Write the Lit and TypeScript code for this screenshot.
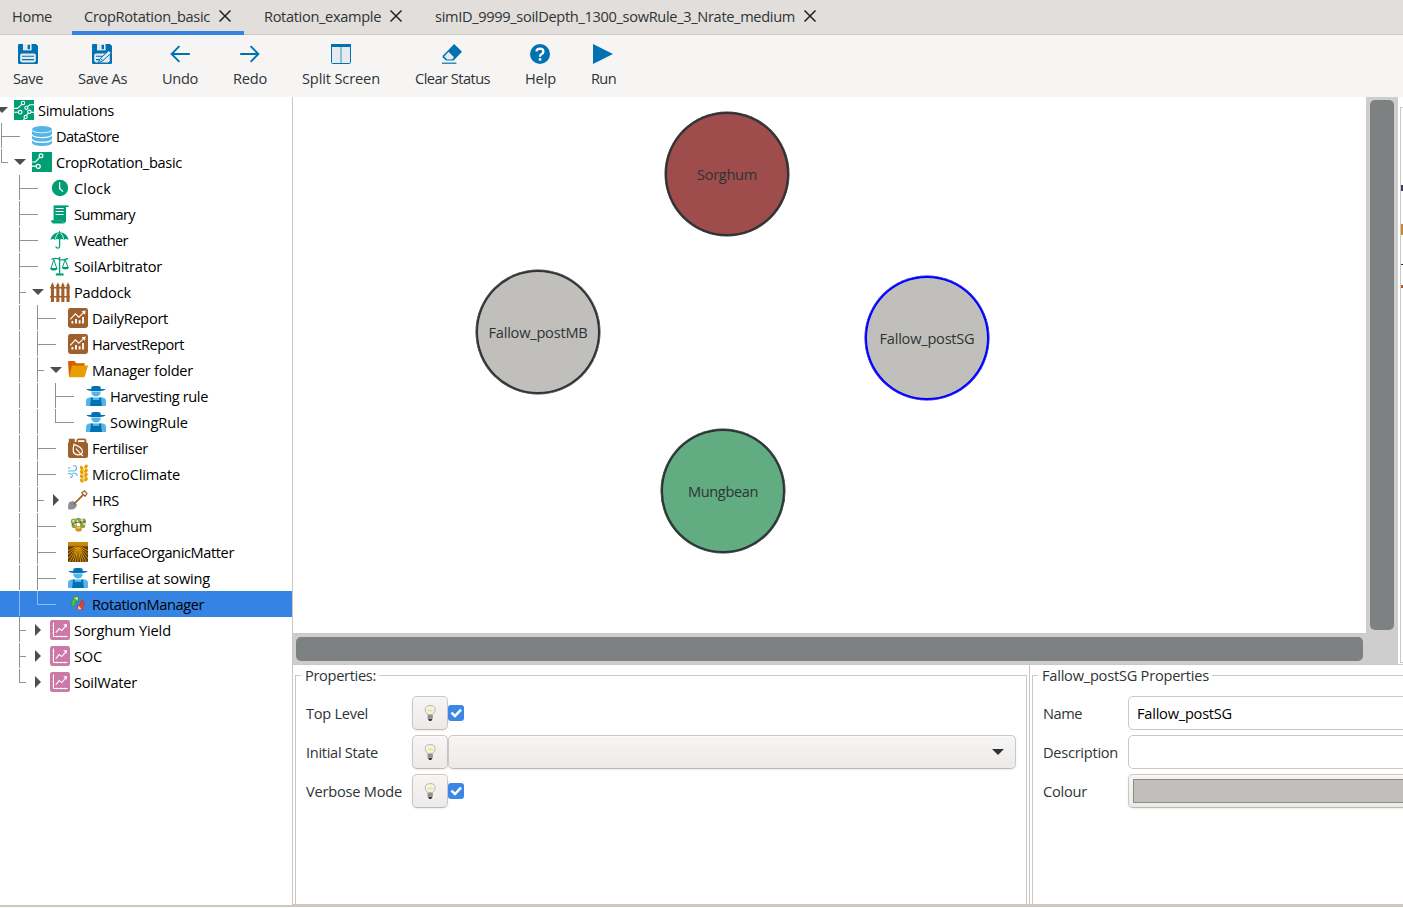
import { LitElement, html, svg, css, nothing, type TemplateResult } from "lit";
import { customElement, property } from "lit/decorators.js";
import { classMap } from "lit/directives/class-map.js";

/** A one-line label whose tracking is adjusted so that it takes a given width. */
@customElement("fit-label")
class FitLabel extends LitElement {
  @property() text = "";
  @property({ type: Number }) width = 0;

  static styles = css`
    :host {
      display: inline-block;
      flex: none;
      white-space: pre;
      line-height: 20px;
      height: 20px;
    }
    .run {
      display: inline-block;
    }
  `;

  updated() {
    const run = this.renderRoot.querySelector<HTMLElement>(".run")!;
    run.style.letterSpacing = "0px";
    const natural = run.getBoundingClientRect().width;
    run.style.letterSpacing = `${(this.width - natural) / this.text.length}px`;
  }

  render() {
    return html`<span class="run">${this.text}</span>`;
  }
}

const BLUE = "#0072b2";
const SKY = "#56b4e9";
const GREEN = "#009e73";
const BROWN = "#a0602c";
const PINK = "#cc79a7";

const farmer = svg`
  <path fill="${BLUE}" d="M5.6 0.6Q10 -0.8 14.4 0.6L14.8 3H19.4Q19.4 4.6 14 5H6Q0.6 4.6 0.6 3H5.2Z"/>
  <path fill="${SKY}" d="M5.2 5.6H14.8Q14.4 10.6 10 10.6Q5.6 10.6 5.2 5.6Z"/>
  <path fill="${SKY}" d="M0 20V15Q0 11.4 4 11.4H16Q20 11.4 20 15V20Z"/>
  <path fill="${BLUE}" d="M4.8 11.4H6.8V14H13.2V11.4H15.2V14.6L16 20H4L4.8 14.6Z"/>`;
const report = svg`
  <rect width="20" height="20" rx="2.4" fill="${BROWN}"/>
  <path stroke="#fff" stroke-width="1.8" d="M4.4 15.6V13M8 15.6V11M11.6 15.6V12.2M15 15.6V9" fill="none"/>
  <path stroke="#fff" stroke-width="1.1" fill="none" d="M2.2 11.4L7.4 5.8L10.8 9.2L16 4.2"/>
  <path fill="#fff" d="M13.6 3.2L17.6 2.6L17 6.8Z"/>`;
const graph = svg`
  <rect width="20" height="20" rx="2.2" fill="${PINK}"/>
  <path stroke="#fff" stroke-width="1" fill="none" d="M3.5 2.4V16.5H17.6M2.6 5.5H3.5M2.6 9.5H3.5M2.6 13H3.5M7 17.4V15.6M11 17.4V15.6M15 17.4V15.6"/>
  <path stroke="#fff" stroke-width="1.1" fill="none" d="M5.8 12.6L9.2 8.6L11.8 10.6L16 5.6"/>
  <path fill="#fff" d="M13.4 4.6L17 4L16.6 7.8Z"/>`;
const wheatGrains = [0, 1, 2, 3].map(
  (i) => svg`<ellipse cx="13.6" cy="${4 + i * 4.2}" rx="1.6" ry="2.2" transform="rotate(-28 13.6 ${4 + i * 4.2})"/>
  <ellipse cx="18" cy="${2.6 + i * 4.2}" rx="1.6" ry="2.2" transform="rotate(28 18 ${2.6 + i * 4.2})"/>`
);
const furrows = [-30, -17, -11, -7.4, -4.8, -2.4, 0, 2.4, 4.8, 7.4, 11, 17, 30].map(
  (d) => svg`<path d="M${10 + d * 0.08} 5L${10 + d * 1.2} 21"/>`
);

const ICONS: Record<string, TemplateResult> = {
  simulations: svg`
    <rect width="20" height="20" fill="${GREEN}"/>
    <g fill="none" stroke="#fff" stroke-width="1.1">
      <path d="M0 8.4H3.4L7.6 4.6M0 12.2H4.2M20 4.8H16L13.6 6.4M20 12.4H17.2M14.2 13.4L12.4 15.4M9.4 20L10.6 18.4"/>
      <circle cx="9" cy="3" r="1.7"/><circle cx="6.2" cy="12.2" r="1.8"/><circle cx="12.4" cy="7.8" r="1.6"/>
      <circle cx="15.4" cy="11.8" r="1.7"/><circle cx="11.6" cy="17" r="1.6"/>
    </g>`,
  datastore: svg`
    <g fill="${SKY}"><ellipse cx="10" cy="3.2" rx="10" ry="3.2"/>
    <path d="M0 4.6Q2 7.2 10 7.2Q18 7.2 20 4.6V8Q18.6 11 10 11Q1.4 11 0 8Z"/>
    <path d="M0 9.6Q2 12.2 10 12.2Q18 12.2 20 9.6V12.8Q18.6 15.6 10 15.6Q1.4 15.6 0 12.8Z"/>
    <path d="M0 14.4Q2 16.9 10 16.9Q18 16.9 20 14.4V17Q18.6 20 10 20Q1.4 20 0 17Z"/></g>`,
  simulation: svg`
    <rect width="20" height="20" fill="${GREEN}"/>
    <g fill="none" stroke="#fff" stroke-width="1.2"><path d="M0 10H3.4L7.6 5.4M0 14.2H4"/>
    <circle cx="9" cy="3.8" r="1.9"/><circle cx="6.2" cy="14.4" r="2"/></g>`,
  clock: svg`<circle cx="10" cy="10" r="8.2" fill="${GREEN}"/>
    <path d="M9.6 4.2V10.4L13 13.6" fill="none" stroke="#fff" stroke-width="1.3"/>`,
  summary: svg`
    <path fill="${GREEN}" d="M3.6 1.4H16V16.6H3.6Z"/><path fill="${GREEN}" d="M15 1.4H18.6V3H16.4Z"/>
    <path fill="${GREEN}" d="M1 16.2H12.6V17.4Q12.6 18.8 14.4 18.6V19.4H3Q1 19 1 16.2Z"/><path fill="${GREEN}" d="M12 15H16V17.2Q15.6 19 14 18.8Q12.4 18.4 12 15Z"/>
    <path stroke="#fff" stroke-width="1" d="M5.6 4.5H13.6M5.6 7.5H13.6M5.6 10.5H13.6"/>`,
  weather: svg`
    <path fill="${GREEN}" d="M9 1H10V2.2Q17.4 3 18.6 10.2Q16 7.8 13.8 10Q11.8 8 9.6 9.8Q7.4 8 5.2 10Q3 7.8 0.4 10.2Q1.6 3 9 2.2Z"/>
    <path stroke="#fff" stroke-width=".8" fill="none" d="M8.4 3Q5.6 5.4 5.3 9.6M10.6 3Q13.4 5.4 13.7 9.6"/>
    <path stroke="${GREEN}" stroke-width="1.2" fill="none" d="M9.6 9V16.6Q9.4 18.4 7.6 18.2Q6 18 5.8 16.2"/>`,
  arbitrator: svg`
    <g fill="none" stroke="${GREEN}" stroke-width="1.3"><path d="M9.6 1V17.6M1.4 3.4Q6 1.4 9.6 3.2Q13 5 18 2.4M6.4 18.4H13"/>
    <path stroke-width="1" d="M3.8 3.6L1 12.4M3.8 3.6L6.8 12.4M15.2 3.6L12.4 11.4M15.2 3.6L18 11.4"/></g>
    <path fill="${GREEN}" d="M0 12H7.6Q7 14.6 3.8 14.6Q0.6 14.6 0 12ZM11.6 11H19.2Q18.4 13.6 15.4 13.6Q12.4 13.6 11.6 11ZM5.8 17.4H13.6V19.4H5.8Z"/>`,
  paddock: svg`
    <g fill="${BROWN}"><path d="M0 5H20V6.4H0ZM0 14H20V15.4H0Z"/>
    ${[0.9, 6.3, 11.3, 16.5].map((x) => svg`<path d="M${x} 3.4L${x + 1.6} 0.2L${x + 3.1} 3.4V20H${x}Z"/>`)}</g>`,
  report,
  folder: svg`
    <path fill="#d55e00" d="M0 1.8Q0 1 1 1H6.6L8.2 3.2H16.6V8L1 16.6Z"/>
    <path fill="#e69f00" d="M4 5.4H20L17 16Q16.6 17.2 15.4 17.2H0.8Z"/>`,
  farmer,
  fertiliser: svg`
    <path fill="${BROWN}" d="M0.8 0.8H6.8V4H8.4V2.6Q8.4 0.4 10.6 0.4H16Q18.4 0.4 18.4 2.8V4.2Q20 4.6 20 6.2V18Q20 20 18 20H2Q0 20 0 18V6Q0 4.6 0.8 4.2Z"/>
    <path fill="#fff" d="M10 2.2H16.4V4H10Z"/>
    <path fill="none" stroke="#fff" stroke-width="1.2" d="M6 6.4Q14.6 9.4 14.4 13.6Q13.8 17.2 10 16.8Q5.4 16.4 5.2 12.4Q5.2 10 6 6.4ZM8 10.6L12.4 15.6L14.8 18"/>`,
  micro: svg`
    <path fill="none" stroke="${SKY}" stroke-width="1.1" d="M0 7H6Q9 6.4 8.4 3.2Q7.4 .8 5.2 2.2M0 4H2.6M4.4 9.2H6.6Q9.8 9.4 8.800 12M0 9.800H2.400Q5 10.400 4.200 12.600Q3.400 13.800 2 13"/>
    <g fill="#e69f00">${wheatGrains}<path d="M15.5 5H16.2V18H15.5Z"/></g>`,
  shovel: svg`
    <path fill="#8d8f92" d="M1.4 12L5.4 11L9 14.6Q8.4 18.6 4.6 19.6L0.4 19.6Q-0.6 14.6 1.4 12Z"/>
    <path fill="none" stroke="${BROWN}" stroke-width="1.7" d="M5.6 14.4L15.4 4.6"/>
    <path fill="none" stroke="${BROWN}" stroke-width="1.2" d="M13.8 2.8L17.2 6.2L19 3.6L16.4 0.8Z"/>`,
  sorghum: svg`
    <g fill="#8aa04e"><circle cx="5.8" cy="5.4" r="3"/><circle cx="10.4" cy="4.4" r="2.7"/><circle cx="15" cy="5.4" r="3"/><circle cx="6.2" cy="9.4" r="2.6"/><circle cx="14.6" cy="9.4" r="2.6"/></g>
    <g fill="#e7e3a8"><circle cx="5.4" cy="5" r="1.2"/><circle cx="9.4" cy="5" r="1"/><circle cx="14" cy="4.2" r="1.2"/><circle cx="16" cy="8" r="1"/><circle cx="7.4" cy="8.4" r="1"/></g>
    <g fill="#4d5c2e"><circle cx="8" cy="6.6" r=".9"/><circle cx="12.4" cy="6.4" r="1"/><circle cx="4.6" cy="8.4" r=".7"/><circle cx="16.4" cy="5.6" r=".8"/></g>
    <path fill="#c98f2a" d="M7 10H14L13.6 14.4Q10.6 16.8 7.6 14.4Z"/><path fill="#f0c95c" d="M8.4 10.6H12.4V12.6H8.4Z"/>`,
  organic: svg`
    <rect width="20" height="20" rx="1" fill="#5b3a10"/>
    <path fill="#c98a06" d="M0 1Q0 0 1 0H19Q20 0 20 1V4.4H0Z"/>
    <path fill="#8a5a10" d="M0 3.8H20V5H0Z"/>
    <g stroke="#dc9803" stroke-width="1">${furrows}</g>`,
  rotation: svg`
    <path fill="#4fbf3a" stroke="#2c8a25" stroke-width=".5" d="M3.8 12Q2.6 6.6 6 4.8L4.8 3L10.6 2.4L10.4 8L8.8 6.6Q6 8 7 12Z"/>
    <path fill="#e2452c" stroke="#b32818" stroke-width=".5" d="M14.6 6Q18.6 10.4 14 13.6L15.2 15.4L9.2 15.8L9.8 10.4L11.4 11.8Q14 10 12.4 7.6Z"/>
    <path fill="#f6c3a0" d="M9.8 15.4L10.4 11.4L13.8 15.2Z"/>
    <path fill="#c8efb4" d="M6.2 3.8L9.8 3.2L9.6 6.4Z"/>`,
  graph,
};

const TOOL_ICONS: Record<string, TemplateResult> = {
  save: svg`
    <path fill="${BLUE}" d="M0 1.2Q0 0 1.2 0H18L20 2V18.8Q20 20 18.8 20H1.2Q0 20 0 18.8Z"/>
    <path fill="#e6e9ee" d="M5 0H13.6V6.4H5Z"/><path fill="${BLUE}" d="M9.6 0.8H12V5.2H9.6Z"/>
    <rect x="2.2" y="9.4" width="15.6" height="9" rx="1.8" fill="#e6e9ee"/>
    <path stroke="${BLUE}" stroke-width="1.1" d="M4 12.3H16M4 15.6H16"/>`,
  saveAs: svg`
    <path fill="${BLUE}" d="M0 1.2Q0 0 1.2 0H18L20 2V18.8Q20 20 18.8 20H1.2Q0 20 0 18.8Z"/>
    <path fill="#e6e9ee" d="M5 0H13.6V6.4H5Z"/><path fill="${BLUE}" d="M9.6 0.8H12V5.2H9.6Z"/>
    <rect x="2.2" y="9.4" width="15.6" height="9" rx="1.8" fill="#e6e9ee"/>
    <path stroke="${BLUE}" stroke-width="1.1" d="M4 12.3H11M4 15.6H8"/>
    <path fill="#e6e9ee" stroke="${BLUE}" stroke-width="1" d="M16.8 6.6L19.4 9L10.4 17L6.4 18.6L8 14.8Z"/>
    <path stroke="${BLUE}" stroke-width="1" d="M9 15L11 16.8"/>`,
  undo: svg`<path fill="none" stroke="${BLUE}" stroke-width="1.9" d="M19.8 10H1.6M9.4 2.2L1.6 10L9.4 17.8"/>`,
  redo: svg`<path fill="none" stroke="${BLUE}" stroke-width="1.9" d="M0.2 10H18.4M10.6 2.2L18.4 10L10.6 17.8"/>`,
  split: svg`<rect x=".5" y=".5" width="19" height="19" rx="1" fill="#e6e9ee" stroke="${BLUE}"/>
    <path fill="${BLUE}" d="M0 0H20V3H0Z"/><path stroke="#5a9fca" stroke-width="1.2" d="M10 3V19"/>`,
  clear: svg`<path fill="${BLUE}" d="M12.2 0L20 7.8L11.6 16.6H4L0.8 13.4Q0.2 12.4 1 11.4Z"/>
    <path fill="#e6e9ee" d="M6.6 7.8L12 13.2L10 15.4H5L2.2 12.6Z"/><path fill="${BLUE}" d="M0 18.6H14.4V19.8H0Z"/>`,
  help: svg`<circle cx="10" cy="10" r="10" fill="${BLUE}"/>
    <path fill="none" stroke="#fff" stroke-width="2.3" d="M6.5 7.4Q6.6 4.6 10 4.6Q13.4 4.7 13.4 7.4Q13.4 9 11.6 10Q10 10.9 10 12.8"/>
    <rect x="8.8" y="14.2" width="2.5" height="2.4" fill="#fff"/>`,
  run: svg`<path fill="${BLUE}" d="M0 0L20 10L0 20Z"/>`,
};

interface TreeRow {
  label: string;
  width: number;
  icon: string;
  /** Depth in the tree. */
  level: number;
  expander?: "open" | "closed";
  /** Last child of its parent. */
  last?: boolean;
  /** Levels whose vertical guide has already ended. */
  ended?: number[];
  selected?: boolean;
}

const TREE: TreeRow[] = [
  { label: "Simulations", width: 76, icon: "simulations", level: 0, expander: "open" },
  { label: "DataStore", width: 63, icon: "datastore", level: 1 },
  { label: "CropRotation_basic", width: 126, icon: "simulation", level: 1, expander: "open", last: true },
  { label: "Clock", width: 37, icon: "clock", level: 2, ended: [1] },
  { label: "Summary", width: 61, icon: "summary", level: 2, ended: [1] },
  { label: "Weather", width: 54, icon: "weather", level: 2, ended: [1] },
  { label: "SoilArbitrator", width: 88, icon: "arbitrator", level: 2, ended: [1] },
  { label: "Paddock", width: 57, icon: "paddock", level: 2, expander: "open", ended: [1] },
  { label: "DailyReport", width: 76, icon: "report", level: 3, ended: [1] },
  { label: "HarvestReport", width: 92, icon: "report", level: 3, ended: [1] },
  { label: "Manager folder", width: 101, icon: "folder", level: 3, expander: "open", ended: [1] },
  { label: "Harvesting rule", width: 98, icon: "farmer", level: 4, ended: [1] },
  { label: "SowingRule", width: 78, icon: "farmer", level: 4, last: true, ended: [1] },
  { label: "Fertiliser", width: 56, icon: "fertiliser", level: 3, ended: [1] },
  { label: "MicroClimate", width: 88, icon: "micro", level: 3, ended: [1] },
  { label: "HRS", width: 27, icon: "shovel", level: 3, expander: "closed", ended: [1] },
  { label: "Sorghum", width: 60, icon: "sorghum", level: 3, ended: [1] },
  { label: "SurfaceOrganicMatter", width: 142, icon: "organic", level: 3, ended: [1] },
  { label: "Fertilise at sowing", width: 118, icon: "farmer", level: 3, ended: [1] },
  { label: "RotationManager", width: 112, icon: "rotation", level: 3, last: true, ended: [1], selected: true },
  { label: "Sorghum Yield", width: 97, icon: "graph", level: 2, expander: "closed", ended: [1] },
  { label: "SOC", width: 28, icon: "graph", level: 2, expander: "closed", ended: [1] },
  { label: "SoilWater", width: 63, icon: "graph", level: 2, expander: "closed", last: true, ended: [1] },
];

const TOOLS = [
  { label: "Save", width: 30, icon: "save" },
  { label: "Save As", width: 49, icon: "saveAs" },
  { label: "Undo", width: 36, icon: "undo" },
  { label: "Redo", width: 34, icon: "redo" },
  { label: "Split Screen", width: 78, icon: "split" },
  { label: "Clear Status", width: 75, icon: "clear" },
  { label: "Help", width: 31, icon: "help" },
  { label: "Run", width: 25, icon: "run" },
];

const NODES = [
  { label: "Sorghum", width: 60, x: 727, y: 174, fill: "#9e4c4c" },
  { label: "Fallow_postMB", width: 99, x: 538, y: 332, fill: "#c1bfbb" },
  { label: "Fallow_postSG", width: 95, x: 927, y: 338, fill: "#c1bfbb", selected: true },
  { label: "Mungbean", width: 70, x: 723, y: 491, fill: "#61ac80" },
];
const CANVAS_X = 293;
const CANVAS_Y = 97;
const NODE_RADIUS = 62;

@customElement("app-root")
class AppRoot extends LitElement {
  static styles = css`
    :host {
      display: flex;
      flex-direction: column;
      width: 1403px;
      height: 908px;
      overflow: hidden;
      background: #fff;
      color: #2e3436;
      font: 14.6px "Open Sans", "Noto Sans", sans-serif;
      font-stretch: 94%;
      --line: #cdc7c2;
    }
    * { box-sizing: border-box; }
    svg { display: block; flex: none; }

    .tabs { display: flex; flex: none; gap: 8px; height: 35px; background: #e1dedb; border-bottom: 1px solid var(--line); }
    .tab { display: flex; gap: 9px; padding: 6px 12px 0; height: 35px; }
    .tab.closable { padding-right: 13px; }
    .tab.active { border-bottom: 4px solid #3584e4; }
    .close { margin-top: 4px; }

    .toolbar { display: flex; flex: none; height: 62px; background: #f6f5f4; padding-left: 13px; gap: 35px; }
    .tool { display: flex; flex-direction: column; align-items: center; padding-top: 9px; gap: 4px; }
    .tool.odd svg { margin-right: 1px; }

    .body { display: flex; flex: none; height: 810px; }
    .tree { flex: none; width: 293px; border: solid var(--line); border-width: 0 1px 2px 0; color: #000; overflow: hidden; }
    .row { display: flex; height: 26px; padding-left: 1px; align-items: center; --guide: #8f9293; }
    .row.selected { background: #3584e4; --guide: #8fbbf0; }
    .guide { display: flex; flex-direction: column; flex: none; width: 18px; height: 26px; }
    .upper { height: 14px; }
    .lower { height: 11px; }
    .line { border-left: 1px solid var(--guide); }
    .stub { width: 7px; border-bottom: 1px solid var(--guide); }
    .stub.leaf { width: 19px; }
    .expander { flex: none; width: 13px; height: 12px; overflow: visible; }
    .row fit-label { margin-left: 4px; }

    .main { display: flex; flex-direction: column; flex: none; width: 1110px; }
    .upper-pane { display: flex; flex: none; height: 567px; }
    .scroller { display: grid; flex: none; grid-template: 537px 30px / 1073px 32px; background: #cecece; }
    .canvas { position: relative; background: #fff; border-bottom: 1px solid var(--line); overflow: hidden; }
    .node {
      position: absolute;
      display: flex;
      align-items: center;
      justify-content: center;
      width: 124px;
      height: 124px;
      border-radius: 50%;
      box-shadow: inset 0 0 0 2px #2e3436, 0 0 0 0.5px #2e3436;
    }
    .node.selected { box-shadow: inset 0 0 0 2px #00f, 0 0 0 0.5px #00f; }
    .vbar { margin: 3px 4px; height: 530px; border-radius: 5px; background: #7e8181; }
    .hbar { margin: 3px; border-radius: 5px; background: #7e8181; }
    .doc { flex: 1; padding: 10px 0 0 2px; overflow: hidden; }
    .doc-frame { width: 20px; height: 556px; border: 1px solid var(--line); display: flex; flex-direction: column; }
    .peek { flex: none; width: 2px; }
    .p1 { margin-top: 77px; height: 6px; background: #3d3a6d; }
    .p2 { margin-top: 33px; height: 11px; background: #c58a35; }
    .p3 { margin-top: 29px; height: 1px; background: #333; }
    .p4 { margin-top: 20px; height: 3px; background: #b2592a; }

    .lower-pane { display: flex; flex: none; height: 243px; border-top: 1px solid var(--line); border-bottom: 3px solid var(--line); overflow: hidden; }
    .side { flex: none; padding: 1px 2px 0; }
    .side.left { width: 736px; }
    .side.right { width: 400px; border-left: 1px solid var(--line); }
    .frame { display: flex; flex-direction: column; height: 238px; }
    .head { display: flex; height: 20px; flex: none; }
    .head-line { border-top: 1px solid var(--line); height: 11px; align-self: flex-end; }
    .head-line.start { width: 6px; border-left: 1px solid var(--line); }
    .head-line.end { flex: 1; border-right: 1px solid var(--line); }
    .head fit-label { margin: -1px 3px 0 4px; }
    .content { flex: 1; border: solid var(--line); border-width: 0 1px; padding: 10px 10px 0; display: flex; flex-direction: column; gap: 5px; }
    .field { display: flex; align-items: center; height: 34px; }
    .name { width: 106px; flex: none; display: flex; }
    .right .name { width: 85px; }
    .btn {
      display: flex;
      align-items: center;
      justify-content: center;
      height: 34px;
      border: 1px solid var(--line);
      border-bottom-color: #bfb8b1;
      border-radius: 5px;
      background: linear-gradient(#f6f5f4, #edebe9);
      box-shadow: 0 1px 2px rgba(0, 0, 0, 0.08), inset 0 1px #fff8;
    }
    .hint { width: 36px; flex: none; }
    .check { flex: none; width: 16px; height: 16px; border-radius: 3px; background: #3c87e4; }
    .combo { width: 568px; flex: none; justify-content: flex-end; padding-right: 11px; }
    .entry { display: flex; align-items: center; flex: none; width: 300px; height: 34px; padding-left: 8px; border: 1px solid var(--line); border-radius: 5px; background: #fff; color: #000; }
    .colour { flex: none; width: 300px; padding: 4px; }
    .swatch { flex: 1; height: 24px; border: 1px solid #8a8a87; background: #c1bfbb; }
  `;

  private closeGlyph() {
    return html`<svg class="close" width="12" height="12" viewBox="0 0 12 12">
      <path d="M.5 .5L11.5 11.5M11.5 .5L.5 11.5" stroke="#1d2122" stroke-width="1.5" />
    </svg>`;
  }

  private tab(label: string, width: number, closable: boolean, active = false) {
    return html`<div class=${classMap({ tab: true, closable, active })}>
      <fit-label .text=${label} .width=${width}></fit-label>
      ${closable ? this.closeGlyph() : nothing}
    </div>`;
  }

  private treeRow(row: TreeRow) {
    const guides = [];
    for (let level = 1; level <= row.level; level++) {
      const own = level === row.level;
      const live = !row.ended?.includes(level);
      guides.push(html`<span class="guide">
        <span class=${classMap({ upper: true, line: live, stub: own, leaf: own && !row.expander })}></span>
        <span class=${classMap({ lower: true, line: live && !(own && row.last) })}></span>
      </span>`);
    }
    return html`<div class=${classMap({ row: true, selected: !!row.selected })}>
      ${guides}
      <svg class="expander" viewBox="0 0 13 12">
        ${row.expander === "open" ? svg`<path fill="#4b4f50" d="M-5 3H7L1 9Z" />` : nothing}
        ${row.expander === "closed" ? svg`<path fill="#4b4f50" d="M-2 0L4 6L-2 12Z" />` : nothing}
      </svg>
      <svg width="20" height="20" viewBox="0 0 20 20">${ICONS[row.icon]}</svg>
      <fit-label .text=${row.label} .width=${row.width}></fit-label>
    </div>`;
  }

  private hint() {
    return html`<span class="btn hint"><svg width="12" height="16" viewBox="0 0 12 16">
      <path d="M3.6 9.4Q1 7 1.2 4Q1.6 .6 6.2 .6Q10.8 .6 11.2 4Q11.4 7 8.8 9.4Z" fill="#f4f3e4" stroke="#a9a99f" stroke-width=".8" />
      <path d="M2.8 5.6Q6.2 2.8 9.6 5.6L8.2 6.6H4.2Z" fill="#efe48a" />
      <path d="M3.6 9.4H8.8V13.6H3.6Z" fill="#b5b5b5" />
      <path d="M3.6 11H8.8M3.6 13H8.8" stroke="#5d5d5d" stroke-width=".8" />
      <path d="M4 14H8.4L7.2 16H5.2Z" fill="#333" />
    </svg></span>`;
  }

  private check() {
    return html`<svg class="check" viewBox="0 0 16 16">
      <path d="M3.4 7.6L7 11L13 4.6" fill="none" stroke="#fff" stroke-width="2.5" />
    </svg>`;
  }

  private fieldName(text: string, width: number) {
    return html`<span class="name"><fit-label .text=${text} .width=${width}></fit-label></span>`;
  }

  private head(text: string, width: number) {
    return html`<div class="head">
      <span class="head-line start"></span>
      <fit-label .text=${text} .width=${width}></fit-label>
      <span class="head-line end"></span>
    </div>`;
  }

  render() {
    return html`
      <div class="tabs">
        ${this.tab("Home", 40, false)}
        ${this.tab("CropRotation_basic", 126, true, true)}
        ${this.tab("Rotation_example", 117, true)}
        ${this.tab("simID_9999_soilDepth_1300_sowRule_3_Nrate_medium", 360, true)}
      </div>
      <div class="toolbar">
        ${TOOLS.map(
          (t) => html`<div class=${classMap({ tool: true, odd: t.width % 2 === 1 })}>
            <svg width="20" height="20" viewBox="0 0 20 20">${TOOL_ICONS[t.icon]}</svg>
            <fit-label .text=${t.label} .width=${t.width}></fit-label>
          </div>`
        )}
      </div>
      <div class="body">
        <div class="tree">${TREE.map((r) => this.treeRow(r))}</div>
        <div class="main">
          <div class="upper-pane">
            <div class="scroller">
              <div class="canvas">
                ${NODES.map(
                  (n) => html`<div
                    class=${classMap({ node: true, selected: !!n.selected })}
                    style="left:${n.x - CANVAS_X - NODE_RADIUS}px;top:${n.y - CANVAS_Y - NODE_RADIUS}px;background:${n.fill}"
                  >
                    <fit-label .text=${n.label} .width=${n.width}></fit-label>
                  </div>`
                )}
              </div>
              <div class="vbar"></div>
              <div class="hbar"></div>
            </div>
            <div class="doc"><div class="doc-frame">
              <span class="peek p1"></span><span class="peek p2"></span>
              <span class="peek p3"></span><span class="peek p4"></span>
            </div></div>
          </div>
          <div class="lower-pane">
            <div class="side left"><div class="frame">
              ${this.head("Properties:", 71)}
              <div class="content">
                <div class="field">${this.fieldName("Top Level", 62)}${this.hint()}${this.check()}</div>
                <div class="field">
                  ${this.fieldName("Initial State", 72)}${this.hint()}
                  <span class="btn combo"><svg width="12" height="6" viewBox="0 0 12 6"><path d="M0 0H12L6 6Z" fill="#2e3436" /></svg></span>
                </div>
                <div class="field">${this.fieldName("Verbose Mode", 96)}${this.hint()}${this.check()}</div>
              </div>
            </div></div>
            <div class="side right"><div class="frame">
              ${this.head("Fallow_postSG Properties", 167)}
              <div class="content">
                <div class="field">${this.fieldName("Name", 39)}<span class="entry"><fit-label .text=${"Fallow_postSG"} .width=${95}></fit-label></span></div>
                <div class="field">${this.fieldName("Description", 75)}<span class="entry"></span></div>
                <div class="field">${this.fieldName("Colour", 44)}<span class="btn colour"><span class="swatch"></span></span></div>
              </div>
            </div></div>
          </div>
        </div>
      </div>
    `;
  }
}
